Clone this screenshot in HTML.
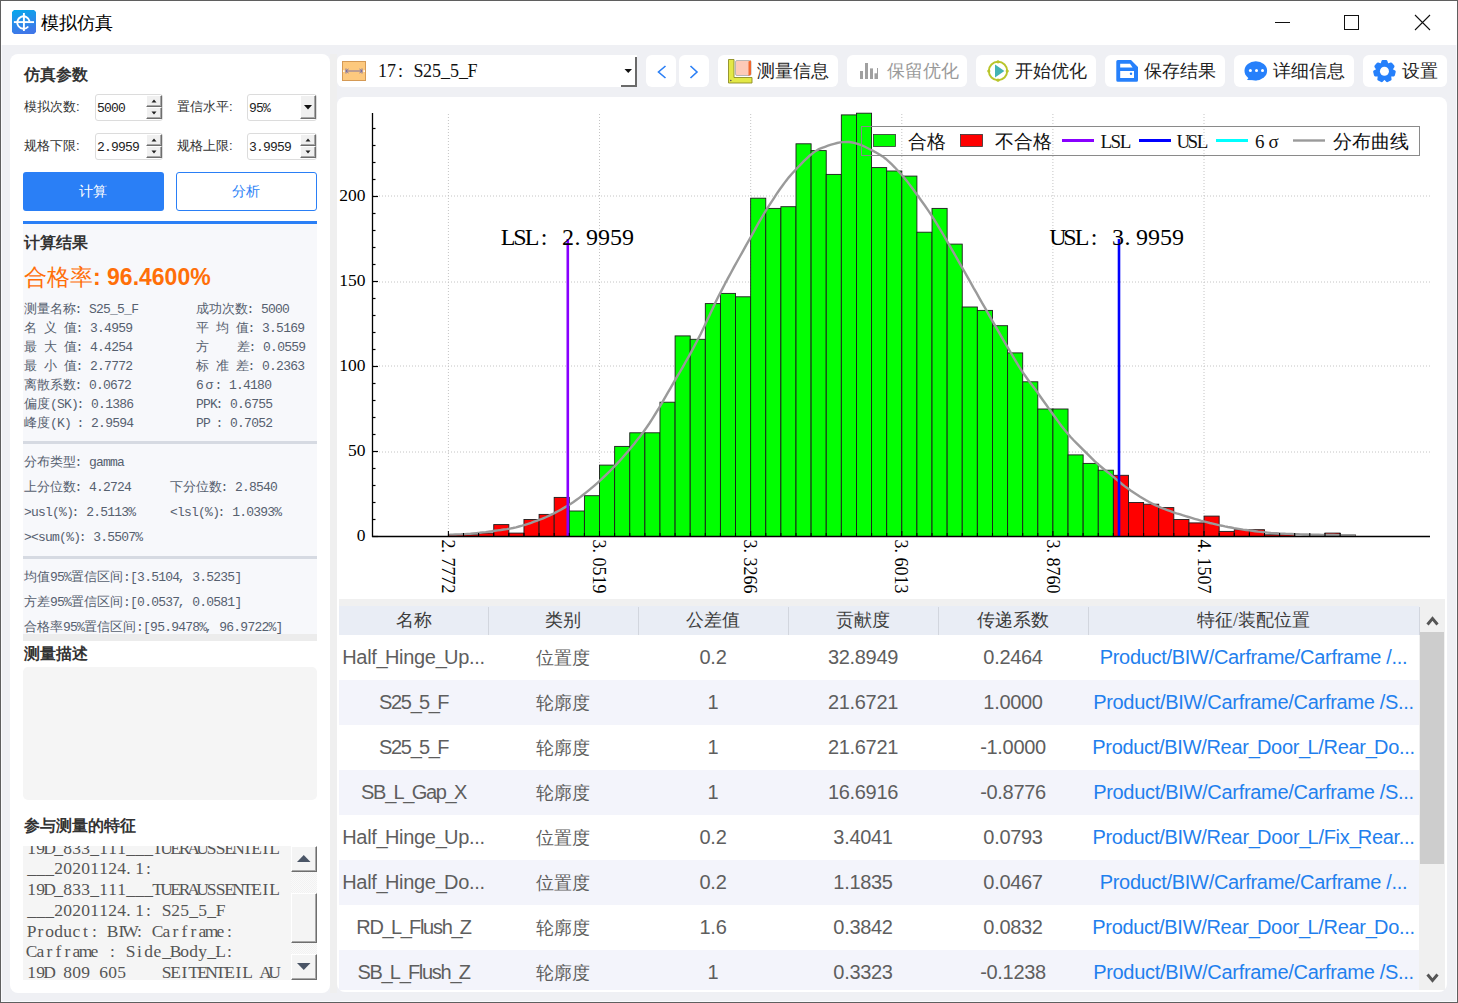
<!DOCTYPE html><html><head><meta charset="utf-8"><style>
*{margin:0;padding:0;box-sizing:border-box}
html,body{width:1458px;height:1003px;overflow:hidden;background:#eff0f4;font-family:"Liberation Sans",sans-serif}
.t{position:absolute;white-space:nowrap;line-height:1}
.m{font-family:"Liberation Mono",monospace;letter-spacing:-0.06em}
.b{position:absolute}
.fc{display:inline-block;width:1em;font-family:'Liberation Mono',monospace;text-indent:-0.12em}
.spin{position:absolute;background:#fff;border:1px solid #dcdcdc;border-radius:3px}
.btn3d{position:absolute;background:#f0f0f0;border-top:1px solid #fff;border-left:1px solid #fff;border-right:1px solid #6e6e6e;border-bottom:1px solid #6e6e6e;box-shadow:inset -1px -1px 0 #a8a8a8}
.tb{position:absolute;top:55px;height:32px;background:#fff;border-radius:6px}
</style></head><body>
<div class="b" style="left:0;top:0;width:1458px;height:45px;background:#fff"></div>
<svg class="b" style="left:12px;top:10px" width="24" height="24" viewBox="0 0 24 24">
<defs><linearGradient id="ig" x1="0" y1="0" x2="0.25" y2="1"><stop offset="0" stop-color="#06a9ec"/><stop offset="1" stop-color="#3f77e8"/></linearGradient></defs>
<path d="M2 0H22L24 2V22L22 24H2L0 22V2Z" fill="url(#ig)"/>
<path d="M16.25 16.5 A6.2 6.2 0 1 1 17.6 11.4" fill="none" stroke="#fff" stroke-width="1.9"/>
<line x1="11.9" y1="3" x2="11.9" y2="21" stroke="#fff" stroke-width="1.9"/>
<line x1="1.9" y1="12.1" x2="22" y2="12.1" stroke="#fff" stroke-width="1.9"/>
</svg>
<div class="t " style="left:41px;top:14px;font-size:18px;color:#000;">模拟仿真</div>
<div class="b" style="left:1275px;top:22px;width:15px;height:1px;background:#111"></div>
<div class="b" style="left:1344px;top:15px;width:15px;height:15px;border:1px solid #111"></div>
<svg class="b" style="left:1414px;top:14px" width="17" height="17"><path d="M1 1L16 16M16 1L1 16" stroke="#111" stroke-width="1.1"/></svg>
<div class="b" style="left:10px;top:54px;width:320px;height:939px;background:#fff;border-radius:8px"></div>
<div class="b" style="left:330px;top:54px;width:7px;height:939px;background:#efefef"></div>
<div class="t " style="left:24px;top:67px;font-size:15.7px;color:#333;font-weight:bold">仿真参数</div>
<div class="t " style="left:24px;top:100px;font-size:13px;color:#333;">模拟次数:</div>
<div class="spin" style="left:95px;top:94px;width:68px;height:27px"></div>
<div class="t " style="left:97px;top:101px;font-size:13px;color:#222;"><span class="m">5000</span></div>
<div class="btn3d" style="left:146px;top:95px;width:16px;height:12px"></div>
<div class="btn3d" style="left:146px;top:107px;width:16px;height:12px"></div>
<svg class="b" style="left:146px;top:95px" width="16" height="24"><path d="M5.5 7.5h5l-2.5-3z M5.5 16.5h5l-2.5 3z" fill="#222"/></svg>
<div class="t " style="left:177px;top:100px;font-size:13px;color:#333;">置信水平:</div>
<div class="spin" style="left:247px;top:94px;width:70px;height:27px"></div>
<div class="t " style="left:249px;top:101px;font-size:13px;color:#222;"><span class="m">95%</span></div>
<div class="btn3d" style="left:300px;top:95px;width:16px;height:24px"></div>
<svg class="b" style="left:300px;top:95px" width="16" height="24"><path d="M4 10h8l-4 4.6z" fill="#111"/></svg>
<div class="t " style="left:24px;top:139px;font-size:13px;color:#333;">规格下限:</div>
<div class="spin" style="left:95px;top:133px;width:68px;height:27px"></div>
<div class="t " style="left:97px;top:140px;font-size:13px;color:#222;"><span class="m">2.9959</span></div>
<div class="btn3d" style="left:146px;top:134px;width:16px;height:12px"></div>
<div class="btn3d" style="left:146px;top:146px;width:16px;height:12px"></div>
<svg class="b" style="left:146px;top:134px" width="16" height="24"><path d="M5.5 7.5h5l-2.5-3z M5.5 16.5h5l-2.5 3z" fill="#222"/></svg>
<div class="t " style="left:177px;top:139px;font-size:13px;color:#333;">规格上限:</div>
<div class="spin" style="left:247px;top:133px;width:70px;height:27px"></div>
<div class="t " style="left:249px;top:140px;font-size:13px;color:#222;"><span class="m">3.9959</span></div>
<div class="btn3d" style="left:300px;top:134px;width:16px;height:12px"></div>
<div class="btn3d" style="left:300px;top:146px;width:16px;height:12px"></div>
<svg class="b" style="left:300px;top:134px" width="16" height="24"><path d="M5.5 7.5h5l-2.5-3z M5.5 16.5h5l-2.5 3z" fill="#222"/></svg>
<div class="b" style="left:23px;top:172px;width:141px;height:39px;background:#2a7ff6;border-radius:3px"></div>
<div class="t " style="left:79px;top:184px;font-size:14px;color:#fff;">计算</div>
<div class="b" style="left:176px;top:172px;width:141px;height:39px;background:#fff;border:1px solid #2a7ff6;border-radius:3px"></div>
<div class="t " style="left:232px;top:184px;font-size:14px;color:#2a7ff6;">分析</div>
<div class="b" style="left:23px;top:221px;width:294px;height:3px;background:#2a7ff6"></div>
<div class="b" style="left:23px;top:224px;width:294px;height:410px;background:#f7f8fb"></div>
<div class="b" style="left:23px;top:441px;width:294px;height:3px;background:#d6dae2"></div>
<div class="b" style="left:23px;top:556px;width:294px;height:3px;background:#d6dae2"></div>
<div class="b" style="left:23px;top:634px;width:294px;height:7px;background:#ececec"></div>
<div class="t " style="left:24px;top:235px;font-size:15.7px;color:#333;font-weight:bold">计算结果</div>
<div class="t" style="left:24px;top:266px;font-size:23px;color:#ff6f08">合格率<b style="font-size:23px">: 96.4600%</b></div>
<div class="t " style="left:24px;top:302px;font-size:13px;color:#56606f;">测量名称<span class="fc">:</span><span class="m">S25_5_F</span></div>
<div class="t " style="left:196px;top:302px;font-size:13px;color:#56606f;">成功次数<span class="fc">:</span><span class="m">5000</span></div>
<div class="t " style="left:24px;top:321px;font-size:13px;color:#56606f;">名<span class="m">&nbsp;</span>义<span class="m">&nbsp;</span>值<span class="fc">:</span><span class="m">3.4959</span></div>
<div class="t " style="left:196px;top:321px;font-size:13px;color:#56606f;">平<span class="m">&nbsp;</span>均<span class="m">&nbsp;</span>值<span class="fc">:</span><span class="m">3.5169</span></div>
<div class="t " style="left:24px;top:340px;font-size:13px;color:#56606f;">最<span class="m">&nbsp;</span>大<span class="m">&nbsp;</span>值<span class="fc">:</span><span class="m">4.4254</span></div>
<div class="t " style="left:196px;top:340px;font-size:13px;color:#56606f;">方<span class="m">&nbsp;&nbsp;&nbsp;&nbsp;</span>差<span class="fc">:</span><span class="m">0.0559</span></div>
<div class="t " style="left:24px;top:359px;font-size:13px;color:#56606f;">最<span class="m">&nbsp;</span>小<span class="m">&nbsp;</span>值<span class="fc">:</span><span class="m">2.7772</span></div>
<div class="t " style="left:196px;top:359px;font-size:13px;color:#56606f;">标<span class="m">&nbsp;</span>准<span class="m">&nbsp;</span>差<span class="fc">:</span><span class="m">0.2363</span></div>
<div class="t " style="left:24px;top:378px;font-size:13px;color:#56606f;">离散系数<span class="fc">:</span><span class="m">0.0672</span></div>
<div class="t " style="left:196px;top:378px;font-size:13px;color:#56606f;"><span class="m">6</span><span style="display:inline-block;width:1em;text-align:center">σ</span><span class="fc">:</span><span class="m">1.4180</span></div>
<div class="t " style="left:24px;top:397px;font-size:13px;color:#56606f;">偏度<span class="m">(SK)</span><span class="fc">:</span><span class="m">0.1386</span></div>
<div class="t " style="left:196px;top:397px;font-size:13px;color:#56606f;"><span class="m">PPK</span><span class="fc">:</span><span class="m">0.6755</span></div>
<div class="t " style="left:24px;top:416px;font-size:13px;color:#56606f;">峰度<span class="m">(K)&nbsp;</span><span class="fc">:</span><span class="m">2.9594</span></div>
<div class="t " style="left:196px;top:416px;font-size:13px;color:#56606f;"><span class="m">PP&nbsp;</span><span class="fc">:</span><span class="m">0.7052</span></div>
<div class="t " style="left:24px;top:455px;font-size:13px;color:#56606f;">分布类型<span class="fc">:</span><span class="m">gamma</span></div>
<div class="t " style="left:24px;top:480px;font-size:13px;color:#56606f;">上分位数<span class="fc">:</span><span class="m">4.2724</span></div>
<div class="t " style="left:170px;top:480px;font-size:13px;color:#56606f;">下分位数<span class="fc">:</span><span class="m">2.8540</span></div>
<div class="t " style="left:24px;top:505px;font-size:13px;color:#56606f;"><span class="m">&gt;usl(%)</span><span class="fc">:</span><span class="m">2.5113%</span></div>
<div class="t " style="left:170px;top:505px;font-size:13px;color:#56606f;"><span class="m">&lt;lsl(%)</span><span class="fc">:</span><span class="m">1.0393%</span></div>
<div class="t " style="left:24px;top:530px;font-size:13px;color:#56606f;"><span class="m">&gt;&lt;sum(%)</span><span class="fc">:</span><span class="m">3.5507%</span></div>
<div class="t " style="left:24px;top:570px;font-size:13px;color:#56606f;">均值<span class="m">95%</span>置信区间<span class="m">:[3.5104</span><span class="fc">,</span><span class="m">3.5235]</span></div>
<div class="t " style="left:24px;top:595px;font-size:13px;color:#56606f;">方差<span class="m">95%</span>置信区间<span class="m">:[0.0537</span><span class="fc">,</span><span class="m">0.0581]</span></div>
<div class="b" style="left:23px;top:615px;width:294px;height:19px;overflow:hidden">
<div class="t " style="left:1px;top:5px;font-size:13px;color:#56606f;">合格率<span class="m">95%</span>置信区间<span class="m">:[95.9478%</span><span class="fc">,</span><span class="m">96.9722%]</span></div>
</div>
<div class="t " style="left:24px;top:646px;font-size:15.7px;color:#333;font-weight:bold">测量描述</div>
<div class="b" style="left:23px;top:667px;width:294px;height:133px;background:#f5f5f5;border-radius:5px"></div>
<div class="t " style="left:24px;top:818px;font-size:15.7px;color:#333;font-weight:bold">参与测量的特征</div>
<div class="b" style="left:23px;top:846px;width:294px;height:134px;background:#f5f5f5;overflow:hidden">
<svg class="b" style="left:0;top:0" width="294" height="134" font-family="Liberation Serif, serif" font-size="17.5" fill="#555">
<text x="8.5 17.5 26.5 35.5 44.5 53.5 62.5 71.5 80.5 89.5 98.5 107.5 116.5 125.5 134.5 143.5 152.5 161.5 170.5 179.5 188.5 197.5 206.5 215.5 224.5 233.5 242.5 251.5" y="7.5" text-anchor="middle" xml:space="preserve">19D_833_111___TUERAUSSENTEIL</text>
<text x="8.5 17.5 26.5 35.5 44.5 53.5 62.5 71.5 80.5 89.5 98.5 105.5 116.5 125.5" y="28.2" text-anchor="middle" xml:space="preserve">___20201124.1:</text>
<text x="8.5 17.5 26.5 35.5 44.5 53.5 62.5 71.5 80.5 89.5 98.5 107.5 116.5 125.5 134.5 143.5 152.5 161.5 170.5 179.5 188.5 197.5 206.5 215.5 224.5 233.5 242.5 251.5" y="49.0" text-anchor="middle" xml:space="preserve">19D_833_111___TUERAUSSENTEIL</text>
<text x="8.5 17.5 26.5 35.5 44.5 53.5 62.5 71.5 80.5 89.5 98.5 105.5 116.5 125.5 134.5 143.5 152.5 161.5 170.5 179.5 188.5 197.5" y="69.8" text-anchor="middle" xml:space="preserve">___20201124.1: S25_5_F</text>
<text x="8.5 17.5 26.5 35.5 44.5 53.5 62.5 71.5 80.5 89.5 98.5 107.5 116.5 125.5 134.5 143.5 152.5 161.5 170.5 179.5 188.5 197.5 206.5" y="90.5" text-anchor="middle" xml:space="preserve">Product: BIW: Carframe:</text>
<text x="8.5 17.5 26.5 35.5 44.5 53.5 62.5 71.5 80.5 89.5 98.5 107.5 116.5 125.5 134.5 143.5 152.5 161.5 170.5 179.5 188.5 197.5 206.5" y="111.2" text-anchor="middle" xml:space="preserve">Carframe : Side_Body_L:</text>
<text x="8.5 17.5 26.5 35.5 44.5 53.5 62.5 71.5 80.5 89.5 98.5 107.5 116.5 125.5 134.5 143.5 152.5 161.5 170.5 179.5 188.5 197.5 206.5 215.5 224.5 233.5 242.5 251.5" y="132.0" text-anchor="middle" xml:space="preserve">19D 809 605    SEITENTEIL AU</text>
</svg>
</div>
<div class="b" style="left:291px;top:846px;width:26px;height:134px;background:repeating-conic-gradient(#f2f2f2 0 25%,#fafafa 0 50%) 0 0/2px 2px"></div>
<div class="btn3d" style="left:291px;top:846px;width:26px;height:26px;background:#f4f4f4"></div>
<div class="btn3d" style="left:291px;top:893px;width:26px;height:50px;background:#f4f4f4"></div>
<div class="btn3d" style="left:291px;top:954px;width:26px;height:26px;background:#f4f4f4"></div>
<svg class="b" style="left:291px;top:846px" width="26" height="134"><path d="M6 16h13.5l-6.75-7z" fill="#4a5566"/><path d="M6 117h13.5l-6.75 7z" fill="#4a5566"/></svg>
<div class="b" style="left:337px;top:55px;width:300px;height:32px;background:#fff;border-radius:6px 0 0 6px"></div>
<div class="b" style="left:621px;top:57px;width:16px;height:30px;border-right:2px solid #6a6a6a;border-bottom:2px solid #6a6a6a;background:#fff"></div>
<svg class="b" style="left:620px;top:60px" width="16" height="20"><path d="M4.5 9h7.5l-3.75 4z" fill="#111"/></svg>
<svg class="b" style="left:342px;top:61px" width="24" height="20"><rect x="0.5" y="0.5" width="23" height="19" fill="#fdc97e" stroke="#d59a55"/>
<path d="M4 10h16M4 7.5v5M20 7.5v5M4 10l2.5-2M4 10l2.5 2M20 10l-2.5-2M20 10l-2.5 2" stroke="#6e6aa8" stroke-width="0.9" fill="none"/>
<rect x="1" y="9.3" width="1.6" height="1.6" fill="#fff"/><rect x="21.4" y="9.3" width="1.6" height="1.6" fill="#fff"/></svg>
<svg class="b" style="left:378px;top:59px;overflow:visible" width="101" height="28"><text x="4.5 13.5 22.5 31.5 40.5 49.5 58.5 67.5 76.5 85.5 94.5" y="18" font-size="18" font-family="Liberation Serif, serif" fill="#111" text-anchor="middle" xml:space="preserve">17: S25_5_F</text></svg>
<div class="tb" style="left:646px;width:30px"></div>
<div class="tb" style="left:679px;width:30px"></div>
<svg class="b" style="left:646px;top:55px" width="64" height="32"><path d="M19.5 11L12.5 17L19.5 23" fill="none" stroke="#2a7ff6" stroke-width="1.6"/><path d="M44.5 11L51 17L44.5 23" fill="none" stroke="#2a7ff6" stroke-width="1.6"/></svg>
<div class="tb" style="left:718px;width:120px"></div>
<div class="t " style="left:757px;top:62px;font-size:18px;color:#222;">测量信息</div>
<div class="tb" style="left:847px;width:120px"></div>
<div class="t " style="left:887px;top:62px;font-size:18px;color:#9a9a9a;">保留优化</div>
<div class="tb" style="left:976px;width:120px"></div>
<div class="t " style="left:1015px;top:62px;font-size:18px;color:#222;">开始优化</div>
<div class="tb" style="left:1105px;width:120px"></div>
<div class="t " style="left:1144px;top:62px;font-size:18px;color:#222;">保存结果</div>
<div class="tb" style="left:1234px;width:120px"></div>
<div class="t " style="left:1273px;top:62px;font-size:18px;color:#222;">详细信息</div>
<div class="tb" style="left:1363px;width:84px"></div>
<div class="t " style="left:1402px;top:62px;font-size:18px;color:#222;">设置</div>
<svg class="b" style="left:726px;top:57px" width="28" height="28">
<path d="M2.5 2.5h5.5v18h18v5.5h-23.5z" fill="#e3e846" stroke="#8c8c24" stroke-width="0.9"/>
<rect x="9.5" y="3.5" width="15.5" height="15" rx="1.5" fill="#fdcab8" stroke="#b0b0b0" stroke-width="0.9"/>
<path d="M22.5 4.5l2.5-1v14l-2.5 1.5z" fill="#f2682f"/>
<circle cx="4.8" cy="23.5" r="0.8" fill="#555"/></svg>
<svg class="b" style="left:856px;top:58px" width="26" height="26">
<rect x="4" y="13" width="3" height="8" fill="#a0a0a0"/><rect x="9" y="5" width="3" height="16" fill="#a0a0a0"/>
<rect x="14" y="10.4" width="3" height="10.6" fill="#a0a0a0"/><rect x="18.5" y="15.3" width="3" height="5.7" fill="#a0a0a0"/><rect x="21" y="10" width="1" height="11" fill="#a0a0a0"/></svg>
<svg class="b" style="left:984px;top:57px" width="28" height="28">
<circle cx="14" cy="14" r="9.2" fill="none" stroke="#b9c52c" stroke-width="1.9"/>
<circle cx="14" cy="4.8" r="1.6" fill="#b9c52c"/><circle cx="14" cy="23.2" r="1.6" fill="#b9c52c"/><circle cx="4.8" cy="14" r="1.6" fill="#b9c52c"/><circle cx="23.2" cy="14" r="1.6" fill="#b9c52c"/>
<path d="M11 7.6v12.8l9.4-6.4z" fill="#43b3b3"/></svg>
<svg class="b" style="left:1114px;top:58px" width="26" height="26">
<path d="M3.8 2.1H17L24 9V22.3A1.5 1.5 0 0 1 22.5 23.8H3.8A1.5 1.5 0 0 1 2.3 22.3V3.6A1.5 1.5 0 0 1 3.8 2.1Z" fill="#2680fb"/>
<path d="M6.2 5.8H16L18.6 9.6H6.2Z" fill="#fff"/>
<rect x="6.2" y="13" width="13.8" height="7" fill="#fff"/><circle cx="17" cy="15.8" r="1.2" fill="#2680fb"/></svg>
<svg class="b" style="left:1240px;top:57px" width="30" height="28">
<ellipse cx="15.8" cy="13.8" rx="11.3" ry="9.6" fill="#2680fb"/><path d="M9.5 19.5L7 22.9L17 23.3z" fill="#2680fb"/>
<circle cx="10.4" cy="13.6" r="1.5" fill="#fff"/><circle cx="16.5" cy="13.6" r="1.5" fill="#fff"/><circle cx="22.5" cy="13.6" r="1.5" fill="#fff"/></svg>
<svg class="b" style="left:1372px;top:59px" width="26" height="26"><path d="M9.80 5.29 L10.71 2.35 L14.19 2.35 L15.10 5.29 L15.81 5.61 L16.37 5.92 L16.94 6.32 L16.20 5.82 L19.07 4.70 L21.23 7.42 L19.50 9.97 L19.70 10.72 L19.80 11.35 L19.85 12.05 L19.78 11.15 L22.44 12.70 L21.66 16.08 L18.60 16.32 L18.13 16.94 L17.70 17.42 L17.18 17.89 L17.84 17.27 L18.29 20.32 L15.16 21.83 L13.06 19.57 L12.28 19.60 L11.64 19.56 L10.95 19.45 L11.84 19.57 L9.74 21.83 L6.61 20.32 L7.06 17.27 L6.56 16.68 L6.19 16.15 L5.85 15.55 L6.30 16.32 L3.24 16.08 L2.46 12.70 L5.12 11.15 L5.27 10.39 L5.46 9.77 L5.72 9.13 L5.40 9.97 L3.67 7.42 L5.83 4.70 L8.70 5.82 L9.39 5.46 L9.99 5.22 L10.66 5.02Z" fill="#2680fb" stroke="#2680fb" stroke-width="2.6" stroke-linejoin="round"/><circle cx="12.45" cy="12.2" r="4.5" fill="#fff"/></svg>
<div class="b" style="left:337px;top:97px;width:1110px;height:895px;background:#fff;border-radius:8px"></div>
<svg class="b" style="left:0;top:0" width="1458" height="1003" font-family="Liberation Serif, serif">
<line x1="448.4" y1="114" x2="448.4" y2="536" stroke="#c4c4c4" stroke-width="1" stroke-dasharray="1 2"/>
<line x1="599.5" y1="114" x2="599.5" y2="536" stroke="#c4c4c4" stroke-width="1" stroke-dasharray="1 2"/>
<line x1="750.7" y1="114" x2="750.7" y2="536" stroke="#c4c4c4" stroke-width="1" stroke-dasharray="1 2"/>
<line x1="901.8" y1="114" x2="901.8" y2="536" stroke="#c4c4c4" stroke-width="1" stroke-dasharray="1 2"/>
<line x1="1052.9" y1="114" x2="1052.9" y2="536" stroke="#c4c4c4" stroke-width="1" stroke-dasharray="1 2"/>
<line x1="1204.0" y1="114" x2="1204.0" y2="536" stroke="#c4c4c4" stroke-width="1" stroke-dasharray="1 2"/>
<line x1="373" y1="452.0" x2="1430" y2="452.0" stroke="#c4c4c4" stroke-width="1" stroke-dasharray="1 2"/>
<line x1="373" y1="366.0" x2="1430" y2="366.0" stroke="#c4c4c4" stroke-width="1" stroke-dasharray="1 2"/>
<line x1="373" y1="282.0" x2="1430" y2="282.0" stroke="#c4c4c4" stroke-width="1" stroke-dasharray="1 2"/>
<line x1="373" y1="196.0" x2="1430" y2="196.0" stroke="#c4c4c4" stroke-width="1" stroke-dasharray="1 2"/>
<rect x="448.40" y="534.80" width="15.11" height="1.70" fill="#ff0000" stroke="#1c1c1c" stroke-width="0.9"/>
<rect x="463.51" y="534.80" width="15.11" height="1.70" fill="#ff0000" stroke="#1c1c1c" stroke-width="0.9"/>
<rect x="478.63" y="533.10" width="15.11" height="3.40" fill="#ff0000" stroke="#1c1c1c" stroke-width="0.9"/>
<rect x="493.74" y="524.60" width="15.11" height="11.90" fill="#ff0000" stroke="#1c1c1c" stroke-width="0.9"/>
<rect x="508.85" y="533.10" width="15.11" height="3.40" fill="#ff0000" stroke="#1c1c1c" stroke-width="0.9"/>
<rect x="523.96" y="519.50" width="15.11" height="17.00" fill="#ff0000" stroke="#1c1c1c" stroke-width="0.9"/>
<rect x="539.08" y="514.40" width="15.11" height="22.10" fill="#ff0000" stroke="#1c1c1c" stroke-width="0.9"/>
<rect x="554.19" y="497.40" width="15.11" height="39.10" fill="#ff0000" stroke="#1c1c1c" stroke-width="0.9"/>
<rect x="569.30" y="511.00" width="15.11" height="25.50" fill="#00ff00" stroke="#1c1c1c" stroke-width="0.9"/>
<rect x="584.42" y="495.70" width="15.11" height="40.80" fill="#00ff00" stroke="#1c1c1c" stroke-width="0.9"/>
<rect x="599.53" y="465.10" width="15.11" height="71.40" fill="#00ff00" stroke="#1c1c1c" stroke-width="0.9"/>
<rect x="614.64" y="446.40" width="15.11" height="90.10" fill="#00ff00" stroke="#1c1c1c" stroke-width="0.9"/>
<rect x="629.76" y="432.80" width="15.11" height="103.70" fill="#00ff00" stroke="#1c1c1c" stroke-width="0.9"/>
<rect x="644.87" y="432.80" width="15.11" height="103.70" fill="#00ff00" stroke="#1c1c1c" stroke-width="0.9"/>
<rect x="659.98" y="402.20" width="15.11" height="134.30" fill="#00ff00" stroke="#1c1c1c" stroke-width="0.9"/>
<rect x="675.10" y="335.90" width="15.11" height="200.60" fill="#00ff00" stroke="#1c1c1c" stroke-width="0.9"/>
<rect x="690.21" y="339.30" width="15.11" height="197.20" fill="#00ff00" stroke="#1c1c1c" stroke-width="0.9"/>
<rect x="705.32" y="303.60" width="15.11" height="232.90" fill="#00ff00" stroke="#1c1c1c" stroke-width="0.9"/>
<rect x="720.43" y="293.40" width="15.11" height="243.10" fill="#00ff00" stroke="#1c1c1c" stroke-width="0.9"/>
<rect x="735.55" y="296.80" width="15.11" height="239.70" fill="#00ff00" stroke="#1c1c1c" stroke-width="0.9"/>
<rect x="750.66" y="198.20" width="15.11" height="338.30" fill="#00ff00" stroke="#1c1c1c" stroke-width="0.9"/>
<rect x="765.77" y="208.40" width="15.11" height="328.10" fill="#00ff00" stroke="#1c1c1c" stroke-width="0.9"/>
<rect x="780.89" y="206.70" width="15.11" height="329.80" fill="#00ff00" stroke="#1c1c1c" stroke-width="0.9"/>
<rect x="796.00" y="143.80" width="15.11" height="392.70" fill="#00ff00" stroke="#1c1c1c" stroke-width="0.9"/>
<rect x="811.11" y="150.60" width="15.11" height="385.90" fill="#00ff00" stroke="#1c1c1c" stroke-width="0.9"/>
<rect x="826.22" y="174.40" width="15.11" height="362.10" fill="#00ff00" stroke="#1c1c1c" stroke-width="0.9"/>
<rect x="841.34" y="114.90" width="15.11" height="421.60" fill="#00ff00" stroke="#1c1c1c" stroke-width="0.9"/>
<rect x="856.45" y="113.20" width="15.11" height="423.30" fill="#00ff00" stroke="#1c1c1c" stroke-width="0.9"/>
<rect x="871.56" y="167.60" width="15.11" height="368.90" fill="#00ff00" stroke="#1c1c1c" stroke-width="0.9"/>
<rect x="886.68" y="171.00" width="15.11" height="365.50" fill="#00ff00" stroke="#1c1c1c" stroke-width="0.9"/>
<rect x="901.79" y="176.10" width="15.11" height="360.40" fill="#00ff00" stroke="#1c1c1c" stroke-width="0.9"/>
<rect x="916.90" y="232.20" width="15.11" height="304.30" fill="#00ff00" stroke="#1c1c1c" stroke-width="0.9"/>
<rect x="932.02" y="208.40" width="15.11" height="328.10" fill="#00ff00" stroke="#1c1c1c" stroke-width="0.9"/>
<rect x="947.13" y="244.10" width="15.11" height="292.40" fill="#00ff00" stroke="#1c1c1c" stroke-width="0.9"/>
<rect x="962.24" y="307.00" width="15.11" height="229.50" fill="#00ff00" stroke="#1c1c1c" stroke-width="0.9"/>
<rect x="977.35" y="310.40" width="15.11" height="226.10" fill="#00ff00" stroke="#1c1c1c" stroke-width="0.9"/>
<rect x="992.47" y="325.70" width="15.11" height="210.80" fill="#00ff00" stroke="#1c1c1c" stroke-width="0.9"/>
<rect x="1007.58" y="352.90" width="15.11" height="183.60" fill="#00ff00" stroke="#1c1c1c" stroke-width="0.9"/>
<rect x="1022.69" y="381.80" width="15.11" height="154.70" fill="#00ff00" stroke="#1c1c1c" stroke-width="0.9"/>
<rect x="1037.81" y="409.00" width="15.11" height="127.50" fill="#00ff00" stroke="#1c1c1c" stroke-width="0.9"/>
<rect x="1052.92" y="409.00" width="15.11" height="127.50" fill="#00ff00" stroke="#1c1c1c" stroke-width="0.9"/>
<rect x="1068.03" y="454.90" width="15.11" height="81.60" fill="#00ff00" stroke="#1c1c1c" stroke-width="0.9"/>
<rect x="1083.15" y="463.40" width="15.11" height="73.10" fill="#00ff00" stroke="#1c1c1c" stroke-width="0.9"/>
<rect x="1098.26" y="470.20" width="15.11" height="66.30" fill="#00ff00" stroke="#1c1c1c" stroke-width="0.9"/>
<rect x="1113.37" y="475.30" width="15.11" height="61.20" fill="#ff0000" stroke="#1c1c1c" stroke-width="0.9"/>
<rect x="1128.49" y="502.50" width="15.11" height="34.00" fill="#ff0000" stroke="#1c1c1c" stroke-width="0.9"/>
<rect x="1143.60" y="504.20" width="15.11" height="32.30" fill="#ff0000" stroke="#1c1c1c" stroke-width="0.9"/>
<rect x="1158.71" y="507.60" width="15.11" height="28.90" fill="#ff0000" stroke="#1c1c1c" stroke-width="0.9"/>
<rect x="1173.82" y="519.50" width="15.11" height="17.00" fill="#ff0000" stroke="#1c1c1c" stroke-width="0.9"/>
<rect x="1188.94" y="522.90" width="15.11" height="13.60" fill="#ff0000" stroke="#1c1c1c" stroke-width="0.9"/>
<rect x="1204.05" y="516.10" width="15.11" height="20.40" fill="#ff0000" stroke="#1c1c1c" stroke-width="0.9"/>
<rect x="1219.16" y="531.40" width="15.11" height="5.10" fill="#ff0000" stroke="#1c1c1c" stroke-width="0.9"/>
<rect x="1234.28" y="529.70" width="15.11" height="6.80" fill="#ff0000" stroke="#1c1c1c" stroke-width="0.9"/>
<rect x="1249.39" y="529.70" width="15.11" height="6.80" fill="#ff0000" stroke="#1c1c1c" stroke-width="0.9"/>
<rect x="1264.50" y="534.80" width="15.11" height="1.70" fill="#ff0000" stroke="#1c1c1c" stroke-width="0.9"/>
<rect x="1279.61" y="534.80" width="15.11" height="1.70" fill="#ff0000" stroke="#1c1c1c" stroke-width="0.9"/>
<rect x="1324.95" y="533.10" width="15.11" height="3.40" fill="#ff0000" stroke="#1c1c1c" stroke-width="0.9"/>
<rect x="1340.07" y="534.80" width="15.11" height="1.70" fill="#ff0000" stroke="#1c1c1c" stroke-width="0.9"/>
<path d="M449.3 534.6 L452.3 534.6 L455.4 534.5 L458.4 534.4 L461.4 534.3 L464.4 534.1 L467.5 533.9 L470.5 533.7 L473.5 533.4 L476.6 533.1 L479.6 532.8 L482.6 532.4 L485.7 532.1 L488.7 531.7 L491.7 531.3 L494.7 530.8 L497.8 530.4 L500.8 530.0 L503.8 529.5 L506.9 529.1 L509.9 528.6 L512.9 528.0 L516.0 527.3 L519.0 526.5 L522.0 525.7 L525.0 524.8 L528.1 523.8 L531.1 522.8 L534.1 521.7 L537.2 520.6 L540.2 519.5 L543.2 518.3 L546.3 517.0 L549.3 515.6 L552.3 514.2 L555.3 512.6 L558.4 511.0 L561.4 509.4 L564.4 507.6 L567.5 505.8 L570.5 504.0 L573.5 502.0 L576.6 499.8 L579.6 497.6 L582.6 495.3 L585.6 492.9 L588.7 490.4 L591.7 487.9 L594.7 485.3 L597.8 482.6 L600.8 479.8 L603.8 477.0 L606.8 474.1 L609.9 471.1 L612.9 468.0 L615.9 464.9 L619.0 461.6 L622.0 458.3 L625.0 454.8 L628.1 451.3 L631.1 447.6 L634.1 443.9 L637.1 440.1 L640.2 436.2 L643.2 432.2 L646.2 428.0 L649.3 423.5 L652.3 418.8 L655.3 414.0 L658.4 409.0 L661.4 403.8 L664.4 398.6 L667.4 393.4 L670.5 388.1 L673.5 382.9 L676.5 377.7 L679.6 372.5 L682.6 367.3 L685.6 362.0 L688.7 356.6 L691.7 351.1 L694.7 345.5 L697.7 339.7 L700.8 333.7 L703.8 327.5 L706.8 321.0 L709.9 314.5 L712.9 308.0 L715.9 301.6 L718.9 295.5 L722.0 289.6 L725.0 283.8 L728.0 278.1 L731.1 272.5 L734.1 266.9 L737.1 261.5 L740.2 256.0 L743.2 250.6 L746.2 245.2 L749.2 239.8 L752.3 234.4 L755.3 228.9 L758.3 223.4 L761.4 218.1 L764.4 213.0 L767.4 208.1 L770.5 203.4 L773.5 198.8 L776.5 194.2 L779.5 189.8 L782.6 185.5 L785.6 181.4 L788.6 177.6 L791.7 174.0 L794.7 170.7 L797.7 167.5 L800.8 164.3 L803.8 161.2 L806.8 158.3 L809.8 155.5 L812.9 153.1 L815.9 150.9 L818.9 149.2 L822.0 147.9 L825.0 146.8 L828.0 145.7 L831.1 144.7 L834.1 143.8 L837.1 143.0 L840.1 142.4 L843.2 142.1 L846.2 141.9 L849.2 142.0 L852.3 142.5 L855.3 143.1 L858.3 144.1 L861.3 145.2 L864.4 146.5 L867.4 148.0 L870.4 149.5 L873.5 151.1 L876.5 152.8 L879.5 154.5 L882.6 156.4 L885.6 158.7 L888.6 161.3 L891.6 164.2 L894.7 167.3 L897.7 170.5 L900.7 173.8 L903.8 177.2 L906.8 180.9 L909.8 184.9 L912.9 189.0 L915.9 193.2 L918.9 197.3 L921.9 201.5 L925.0 205.7 L928.0 210.1 L931.0 214.6 L934.1 219.4 L937.1 224.3 L940.1 229.3 L943.2 234.5 L946.2 239.6 L949.2 244.8 L952.2 250.1 L955.3 255.5 L958.3 260.8 L961.3 266.2 L964.4 271.5 L967.4 276.9 L970.4 282.2 L973.4 287.6 L976.5 292.9 L979.5 298.3 L982.5 303.6 L985.6 308.9 L988.6 314.3 L991.6 319.6 L994.7 324.9 L997.7 330.2 L1000.7 335.4 L1003.7 340.6 L1006.8 345.8 L1009.8 351.0 L1012.8 356.2 L1015.9 361.3 L1018.9 366.3 L1021.9 371.1 L1025.0 375.5 L1028.0 379.7 L1031.0 383.8 L1034.0 387.8 L1037.1 391.9 L1040.1 396.2 L1043.1 400.5 L1046.2 404.8 L1049.2 409.1 L1052.2 413.3 L1055.3 417.5 L1058.3 421.6 L1061.3 425.7 L1064.3 429.6 L1067.4 433.3 L1070.4 436.8 L1073.4 440.0 L1076.5 443.1 L1079.5 446.1 L1082.5 449.1 L1085.6 452.2 L1088.6 455.2 L1091.6 458.2 L1094.6 461.1 L1097.7 463.9 L1100.7 466.5 L1103.7 469.0 L1106.8 471.5 L1109.8 473.9 L1112.8 476.4 L1115.8 478.9 L1118.9 481.4 L1121.9 484.0 L1124.9 486.4 L1128.0 488.6 L1131.0 490.7 L1134.0 492.7 L1137.1 494.7 L1140.1 496.7 L1143.1 498.5 L1146.1 500.3 L1149.2 502.0 L1152.2 503.6 L1155.2 505.1 L1158.3 506.5 L1161.3 507.8 L1164.3 509.0 L1167.4 510.1 L1170.4 511.2 L1173.4 512.3 L1176.4 513.3 L1179.5 514.2 L1182.5 515.2 L1185.5 516.1 L1188.6 517.0 L1191.6 517.9 L1194.6 518.8 L1197.7 519.7 L1200.7 520.6 L1203.7 521.4 L1206.7 522.2 L1209.8 523.0 L1212.8 523.7 L1215.8 524.4 L1218.9 525.1 L1221.9 525.7 L1224.9 526.4 L1227.9 527.0 L1231.0 527.5 L1234.0 528.1 L1237.0 528.6 L1240.1 529.1 L1243.1 529.6 L1246.1 530.0 L1249.2 530.4 L1252.2 530.8 L1255.2 531.2 L1258.2 531.6 L1261.3 531.9 L1264.3 532.3 L1267.3 532.6 L1270.4 532.9 L1273.4 533.1 L1276.4 533.3 L1279.5 533.5 L1282.5 533.6 L1285.5 533.8 L1288.5 533.9 L1291.6 534.0 L1294.6 534.2 L1297.6 534.3 L1300.7 534.4 L1303.7 534.5 L1306.7 534.5 L1309.8 534.6 L1312.8 534.7 L1315.8 534.8 L1318.8 534.8 L1321.9 534.9 L1324.9 534.9 L1327.9 535.0 L1331.0 535.0 L1334.0 535.0 L1337.0 535.1 L1340.1 535.1 L1343.1 535.1 L1346.1 535.2 L1349.1 535.2 L1352.2 535.2 L1355.2 535.2" fill="none" stroke="#9a9a9a" stroke-width="2.4"/>
<line x1="567.8" y1="239" x2="567.8" y2="536" stroke="#8800ff" stroke-width="2.6"/>
<line x1="1119" y1="239" x2="1119" y2="536" stroke="#0000ff" stroke-width="2.6"/>
<line x1="372.5" y1="113" x2="372.5" y2="537" stroke="#000" stroke-width="1.3"/>
<line x1="372" y1="536.5" x2="1430" y2="536.5" stroke="#000" stroke-width="1.3"/>
<line x1="372.5" y1="536.5" x2="378.0" y2="536.5" stroke="#000" stroke-width="1.2"/>
<line x1="372.5" y1="519.5" x2="375.5" y2="519.5" stroke="#000" stroke-width="1.2"/>
<line x1="372.5" y1="502.5" x2="375.5" y2="502.5" stroke="#000" stroke-width="1.2"/>
<line x1="372.5" y1="485.5" x2="375.5" y2="485.5" stroke="#000" stroke-width="1.2"/>
<line x1="372.5" y1="468.5" x2="375.5" y2="468.5" stroke="#000" stroke-width="1.2"/>
<line x1="372.5" y1="451.5" x2="378.0" y2="451.5" stroke="#000" stroke-width="1.2"/>
<line x1="372.5" y1="434.5" x2="375.5" y2="434.5" stroke="#000" stroke-width="1.2"/>
<line x1="372.5" y1="417.5" x2="375.5" y2="417.5" stroke="#000" stroke-width="1.2"/>
<line x1="372.5" y1="400.5" x2="375.5" y2="400.5" stroke="#000" stroke-width="1.2"/>
<line x1="372.5" y1="383.5" x2="375.5" y2="383.5" stroke="#000" stroke-width="1.2"/>
<line x1="372.5" y1="366.5" x2="378.0" y2="366.5" stroke="#000" stroke-width="1.2"/>
<line x1="372.5" y1="349.5" x2="375.5" y2="349.5" stroke="#000" stroke-width="1.2"/>
<line x1="372.5" y1="332.5" x2="375.5" y2="332.5" stroke="#000" stroke-width="1.2"/>
<line x1="372.5" y1="315.5" x2="375.5" y2="315.5" stroke="#000" stroke-width="1.2"/>
<line x1="372.5" y1="298.5" x2="375.5" y2="298.5" stroke="#000" stroke-width="1.2"/>
<line x1="372.5" y1="281.5" x2="378.0" y2="281.5" stroke="#000" stroke-width="1.2"/>
<line x1="372.5" y1="264.5" x2="375.5" y2="264.5" stroke="#000" stroke-width="1.2"/>
<line x1="372.5" y1="247.5" x2="375.5" y2="247.5" stroke="#000" stroke-width="1.2"/>
<line x1="372.5" y1="230.5" x2="375.5" y2="230.5" stroke="#000" stroke-width="1.2"/>
<line x1="372.5" y1="213.5" x2="375.5" y2="213.5" stroke="#000" stroke-width="1.2"/>
<line x1="372.5" y1="196.5" x2="378.0" y2="196.5" stroke="#000" stroke-width="1.2"/>
<line x1="372.5" y1="179.5" x2="375.5" y2="179.5" stroke="#000" stroke-width="1.2"/>
<line x1="372.5" y1="162.5" x2="375.5" y2="162.5" stroke="#000" stroke-width="1.2"/>
<line x1="372.5" y1="145.5" x2="375.5" y2="145.5" stroke="#000" stroke-width="1.2"/>
<line x1="372.5" y1="128.5" x2="375.5" y2="128.5" stroke="#000" stroke-width="1.2"/>
<line x1="448.4" y1="536" x2="448.4" y2="531.0" stroke="#000" stroke-width="1.1"/>
<line x1="463.5" y1="536" x2="463.5" y2="533.0" stroke="#000" stroke-width="1.1"/>
<line x1="478.6" y1="536" x2="478.6" y2="533.0" stroke="#000" stroke-width="1.1"/>
<line x1="493.7" y1="536" x2="493.7" y2="533.0" stroke="#000" stroke-width="1.1"/>
<line x1="508.9" y1="536" x2="508.9" y2="533.0" stroke="#000" stroke-width="1.1"/>
<line x1="524.0" y1="536" x2="524.0" y2="533.0" stroke="#000" stroke-width="1.1"/>
<line x1="539.1" y1="536" x2="539.1" y2="533.0" stroke="#000" stroke-width="1.1"/>
<line x1="554.2" y1="536" x2="554.2" y2="533.0" stroke="#000" stroke-width="1.1"/>
<line x1="569.3" y1="536" x2="569.3" y2="533.0" stroke="#000" stroke-width="1.1"/>
<line x1="584.4" y1="536" x2="584.4" y2="533.0" stroke="#000" stroke-width="1.1"/>
<line x1="599.5" y1="536" x2="599.5" y2="531.0" stroke="#000" stroke-width="1.1"/>
<line x1="614.6" y1="536" x2="614.6" y2="533.0" stroke="#000" stroke-width="1.1"/>
<line x1="629.8" y1="536" x2="629.8" y2="533.0" stroke="#000" stroke-width="1.1"/>
<line x1="644.9" y1="536" x2="644.9" y2="533.0" stroke="#000" stroke-width="1.1"/>
<line x1="660.0" y1="536" x2="660.0" y2="533.0" stroke="#000" stroke-width="1.1"/>
<line x1="675.1" y1="536" x2="675.1" y2="533.0" stroke="#000" stroke-width="1.1"/>
<line x1="690.2" y1="536" x2="690.2" y2="533.0" stroke="#000" stroke-width="1.1"/>
<line x1="705.3" y1="536" x2="705.3" y2="533.0" stroke="#000" stroke-width="1.1"/>
<line x1="720.4" y1="536" x2="720.4" y2="533.0" stroke="#000" stroke-width="1.1"/>
<line x1="735.5" y1="536" x2="735.5" y2="533.0" stroke="#000" stroke-width="1.1"/>
<line x1="750.7" y1="536" x2="750.7" y2="531.0" stroke="#000" stroke-width="1.1"/>
<line x1="765.8" y1="536" x2="765.8" y2="533.0" stroke="#000" stroke-width="1.1"/>
<line x1="780.9" y1="536" x2="780.9" y2="533.0" stroke="#000" stroke-width="1.1"/>
<line x1="796.0" y1="536" x2="796.0" y2="533.0" stroke="#000" stroke-width="1.1"/>
<line x1="811.1" y1="536" x2="811.1" y2="533.0" stroke="#000" stroke-width="1.1"/>
<line x1="826.2" y1="536" x2="826.2" y2="533.0" stroke="#000" stroke-width="1.1"/>
<line x1="841.3" y1="536" x2="841.3" y2="533.0" stroke="#000" stroke-width="1.1"/>
<line x1="856.5" y1="536" x2="856.5" y2="533.0" stroke="#000" stroke-width="1.1"/>
<line x1="871.6" y1="536" x2="871.6" y2="533.0" stroke="#000" stroke-width="1.1"/>
<line x1="886.7" y1="536" x2="886.7" y2="533.0" stroke="#000" stroke-width="1.1"/>
<line x1="901.8" y1="536" x2="901.8" y2="531.0" stroke="#000" stroke-width="1.1"/>
<line x1="916.9" y1="536" x2="916.9" y2="533.0" stroke="#000" stroke-width="1.1"/>
<line x1="932.0" y1="536" x2="932.0" y2="533.0" stroke="#000" stroke-width="1.1"/>
<line x1="947.1" y1="536" x2="947.1" y2="533.0" stroke="#000" stroke-width="1.1"/>
<line x1="962.2" y1="536" x2="962.2" y2="533.0" stroke="#000" stroke-width="1.1"/>
<line x1="977.4" y1="536" x2="977.4" y2="533.0" stroke="#000" stroke-width="1.1"/>
<line x1="992.5" y1="536" x2="992.5" y2="533.0" stroke="#000" stroke-width="1.1"/>
<line x1="1007.6" y1="536" x2="1007.6" y2="533.0" stroke="#000" stroke-width="1.1"/>
<line x1="1022.7" y1="536" x2="1022.7" y2="533.0" stroke="#000" stroke-width="1.1"/>
<line x1="1037.8" y1="536" x2="1037.8" y2="533.0" stroke="#000" stroke-width="1.1"/>
<line x1="1052.9" y1="536" x2="1052.9" y2="531.0" stroke="#000" stroke-width="1.1"/>
<line x1="1068.0" y1="536" x2="1068.0" y2="533.0" stroke="#000" stroke-width="1.1"/>
<line x1="1083.1" y1="536" x2="1083.1" y2="533.0" stroke="#000" stroke-width="1.1"/>
<line x1="1098.3" y1="536" x2="1098.3" y2="533.0" stroke="#000" stroke-width="1.1"/>
<line x1="1113.4" y1="536" x2="1113.4" y2="533.0" stroke="#000" stroke-width="1.1"/>
<line x1="1128.5" y1="536" x2="1128.5" y2="533.0" stroke="#000" stroke-width="1.1"/>
<line x1="1143.6" y1="536" x2="1143.6" y2="533.0" stroke="#000" stroke-width="1.1"/>
<line x1="1158.7" y1="536" x2="1158.7" y2="533.0" stroke="#000" stroke-width="1.1"/>
<line x1="1173.8" y1="536" x2="1173.8" y2="533.0" stroke="#000" stroke-width="1.1"/>
<line x1="1188.9" y1="536" x2="1188.9" y2="533.0" stroke="#000" stroke-width="1.1"/>
<line x1="1204.0" y1="536" x2="1204.0" y2="531.0" stroke="#000" stroke-width="1.1"/>
<line x1="1219.2" y1="536" x2="1219.2" y2="533.0" stroke="#000" stroke-width="1.1"/>
<line x1="1234.3" y1="536" x2="1234.3" y2="533.0" stroke="#000" stroke-width="1.1"/>
<line x1="1249.4" y1="536" x2="1249.4" y2="533.0" stroke="#000" stroke-width="1.1"/>
<line x1="1264.5" y1="536" x2="1264.5" y2="533.0" stroke="#000" stroke-width="1.1"/>
<line x1="1279.6" y1="536" x2="1279.6" y2="533.0" stroke="#000" stroke-width="1.1"/>
<line x1="1294.7" y1="536" x2="1294.7" y2="533.0" stroke="#000" stroke-width="1.1"/>
<line x1="1309.8" y1="536" x2="1309.8" y2="533.0" stroke="#000" stroke-width="1.1"/>
<line x1="1325.0" y1="536" x2="1325.0" y2="533.0" stroke="#000" stroke-width="1.1"/>
<line x1="1340.1" y1="536" x2="1340.1" y2="533.0" stroke="#000" stroke-width="1.1"/>
<text x="365.5" y="541.1" font-size="17.5" text-anchor="end" fill="#000">0</text>
<text x="365.5" y="456.1" font-size="17.5" text-anchor="end" fill="#000">50</text>
<text x="365.5" y="371.1" font-size="17.5" text-anchor="end" fill="#000">100</text>
<text x="365.5" y="286.1" font-size="17.5" text-anchor="end" fill="#000">150</text>
<text x="365.5" y="201.1" font-size="17.5" text-anchor="end" fill="#000">200</text>
<text transform="translate(448.4,539.5) rotate(90)" x="4.5 11.3 22.5 31.5 40.5 49.5" y="6.3" font-size="18" fill="#000" text-anchor="middle">2.7772</text>
<text transform="translate(599.5,539.5) rotate(90)" x="4.5 11.3 22.5 31.5 40.5 49.5" y="6.3" font-size="18" fill="#000" text-anchor="middle">3.0519</text>
<text transform="translate(750.7,539.5) rotate(90)" x="4.5 11.3 22.5 31.5 40.5 49.5" y="6.3" font-size="18" fill="#000" text-anchor="middle">3.3266</text>
<text transform="translate(901.8,539.5) rotate(90)" x="4.5 11.3 22.5 31.5 40.5 49.5" y="6.3" font-size="18" fill="#000" text-anchor="middle">3.6013</text>
<text transform="translate(1052.9,539.5) rotate(90)" x="4.5 11.3 22.5 31.5 40.5 49.5" y="6.3" font-size="18" fill="#000" text-anchor="middle">3.8760</text>
<text transform="translate(1204.0,539.5) rotate(90)" x="4.5 11.3 22.5 31.5 40.5 49.5" y="6.3" font-size="18" fill="#000" text-anchor="middle">4.1507</text>
<text x="508.0 520.0 532.0 544.0 556.0 568.0 577.4 592.0 604.0 616.0 628.0" y="244.5" font-size="24" text-anchor="middle" fill="#000"  xml:space="preserve">LSL: 2.9959</text>
<text x="1058.0 1070.0 1082.0 1094.0 1106.0 1118.0 1127.4 1142.0 1154.0 1166.0 1178.0" y="244.5" font-size="24" text-anchor="middle" fill="#000"  xml:space="preserve">USL: 3.9959</text>
<rect x="861.5" y="126.5" width="558" height="29" fill="none" stroke="#8a8a8a" stroke-width="1"/>
<rect x="873.5" y="134.5" width="22" height="12" fill="#00ff00" stroke="#333" stroke-width="0.8"/>
<rect x="960.5" y="134.5" width="22" height="12" fill="#ff0000" stroke="#333" stroke-width="0.8"/>
<line x1="1062" y1="140.5" x2="1094" y2="140.5" stroke="#8800ff" stroke-width="3"/>
<line x1="1139" y1="140.5" x2="1171" y2="140.5" stroke="#0000ff" stroke-width="3"/>
<line x1="1216" y1="140.5" x2="1248" y2="140.5" stroke="#00ffff" stroke-width="3"/>
<line x1="1293" y1="140.5" x2="1325" y2="140.5" stroke="#9a9a9a" stroke-width="2.4"/>
<text x="908" y="147.5" font-size="19" font-family="Liberation Sans, sans-serif" fill="#111">合格</text>
<text x="995" y="147.5" font-size="19" font-family="Liberation Sans, sans-serif" fill="#111">不合格</text>
<text x="1333" y="147.5" font-size="19" font-family="Liberation Sans, sans-serif" fill="#111">分布曲线</text>
<text x="1106.3 1115.9 1125.5" y="148" font-size="19" text-anchor="middle" fill="#000" style="fill:#111" xml:space="preserve">LSL</text>
<text x="1183.3 1192.9 1202.5" y="148" font-size="19" text-anchor="middle" fill="#000" style="fill:#111" xml:space="preserve">USL</text>
<text x="1255" y="148" font-size="19" fill="#111">6<tspan dx="4">σ</tspan></text>
</svg>
<div class="b" style="left:339px;top:599px;width:1106px;height:391px;background:#f0f0f0"></div>
<div class="b" style="left:339px;top:606px;width:1080px;height:29px;background:#e9edf5"></div>
<div class="b" style="left:488px;top:607px;width:1px;height:28px;background:#d2d6de"></div>
<div class="b" style="left:638px;top:607px;width:1px;height:28px;background:#d2d6de"></div>
<div class="b" style="left:788px;top:607px;width:1px;height:28px;background:#d2d6de"></div>
<div class="b" style="left:938px;top:607px;width:1px;height:28px;background:#d2d6de"></div>
<div class="b" style="left:1088px;top:607px;width:1px;height:28px;background:#d2d6de"></div>
<div class="b" style="left:1419px;top:607px;width:1px;height:28px;background:#d2d6de"></div>
<div class="t" style="left:339px;width:149px;top:611px;font-size:18px;color:#3c3c3c;text-align:center">名称</div>
<div class="t" style="left:488px;width:150px;top:611px;font-size:18px;color:#3c3c3c;text-align:center">类别</div>
<div class="t" style="left:638px;width:150px;top:611px;font-size:18px;color:#3c3c3c;text-align:center">公差值</div>
<div class="t" style="left:788px;width:150px;top:611px;font-size:18px;color:#3c3c3c;text-align:center">贡献度</div>
<div class="t" style="left:938px;width:150px;top:611px;font-size:18px;color:#3c3c3c;text-align:center">传递系数</div>
<div class="t" style="left:1088px;width:331px;top:611px;font-size:18px;color:#3c3c3c;text-align:center">特征<span style="font-family:'Liberation Serif',serif">/</span>装配位置</div>
<div class="b" style="left:339px;top:635px;width:1080px;height:355px;overflow:hidden">
<div class="b" style="left:0;top:0px;width:1080px;height:45px;background:#ffffff"></div>
<div class="t" style="left:0px;width:149px;top:12px;font-size:20px;letter-spacing:-0.3px;color:#5e5e5e;text-align:center">Half<span style="letter-spacing:-2.8px">_</span>Hinge<span style="letter-spacing:-2.8px">_</span>Up...</div>
<div class="t" style="left:149px;width:150px;top:12px;font-size:20px;letter-spacing:-0.3px;color:#5e5e5e;text-align:center"><span style="font-size:18px;letter-spacing:0">位置度</span></div>
<div class="t" style="left:299px;width:150px;top:12px;font-size:20px;letter-spacing:-0.3px;color:#5e5e5e;text-align:center">0.2</div>
<div class="t" style="left:449px;width:150px;top:12px;font-size:20px;letter-spacing:-0.3px;color:#5e5e5e;text-align:center">32.8949</div>
<div class="t" style="left:599px;width:150px;top:12px;font-size:20px;letter-spacing:-0.3px;color:#5e5e5e;text-align:center">0.2464</div>
<div class="t" style="left:749px;width:331px;top:12px;font-size:20px;letter-spacing:-0.3px;color:#1f80ee;text-align:center">Product/BIW/Carframe/Carframe /...</div>
<div class="b" style="left:0;top:45px;width:1080px;height:45px;background:#f3f4fb"></div>
<div class="t" style="left:0px;width:149px;top:57px;font-size:20px;letter-spacing:-1.3px;color:#5e5e5e;text-align:center">S25<span style="letter-spacing:-2.8px">_</span>5<span style="letter-spacing:-2.8px">_</span>F</div>
<div class="t" style="left:149px;width:150px;top:57px;font-size:20px;letter-spacing:-0.3px;color:#5e5e5e;text-align:center"><span style="font-size:18px;letter-spacing:0">轮廓度</span></div>
<div class="t" style="left:299px;width:150px;top:57px;font-size:20px;letter-spacing:-0.3px;color:#5e5e5e;text-align:center">1</div>
<div class="t" style="left:449px;width:150px;top:57px;font-size:20px;letter-spacing:-0.3px;color:#5e5e5e;text-align:center">21.6721</div>
<div class="t" style="left:599px;width:150px;top:57px;font-size:20px;letter-spacing:-0.3px;color:#5e5e5e;text-align:center">1.0000</div>
<div class="t" style="left:749px;width:331px;top:57px;font-size:20px;letter-spacing:-0.3px;color:#1f80ee;text-align:center">Product/BIW/Carframe/Carframe /S...</div>
<div class="b" style="left:0;top:90px;width:1080px;height:45px;background:#ffffff"></div>
<div class="t" style="left:0px;width:149px;top:102px;font-size:20px;letter-spacing:-1.3px;color:#5e5e5e;text-align:center">S25<span style="letter-spacing:-2.8px">_</span>5<span style="letter-spacing:-2.8px">_</span>F</div>
<div class="t" style="left:149px;width:150px;top:102px;font-size:20px;letter-spacing:-0.3px;color:#5e5e5e;text-align:center"><span style="font-size:18px;letter-spacing:0">轮廓度</span></div>
<div class="t" style="left:299px;width:150px;top:102px;font-size:20px;letter-spacing:-0.3px;color:#5e5e5e;text-align:center">1</div>
<div class="t" style="left:449px;width:150px;top:102px;font-size:20px;letter-spacing:-0.3px;color:#5e5e5e;text-align:center">21.6721</div>
<div class="t" style="left:599px;width:150px;top:102px;font-size:20px;letter-spacing:-0.3px;color:#5e5e5e;text-align:center">-1.0000</div>
<div class="t" style="left:749px;width:331px;top:102px;font-size:20px;letter-spacing:-0.3px;color:#1f80ee;text-align:center">Product/BIW/Rear<span style="letter-spacing:-2.8px">_</span>Door<span style="letter-spacing:-2.8px">_</span>L/Rear<span style="letter-spacing:-2.8px">_</span>Do...</div>
<div class="b" style="left:0;top:135px;width:1080px;height:45px;background:#f3f4fb"></div>
<div class="t" style="left:0px;width:149px;top:147px;font-size:20px;letter-spacing:-1.3px;color:#5e5e5e;text-align:center">SB<span style="letter-spacing:-2.8px">_</span>L<span style="letter-spacing:-2.8px">_</span>Gap<span style="letter-spacing:-2.8px">_</span>X</div>
<div class="t" style="left:149px;width:150px;top:147px;font-size:20px;letter-spacing:-0.3px;color:#5e5e5e;text-align:center"><span style="font-size:18px;letter-spacing:0">轮廓度</span></div>
<div class="t" style="left:299px;width:150px;top:147px;font-size:20px;letter-spacing:-0.3px;color:#5e5e5e;text-align:center">1</div>
<div class="t" style="left:449px;width:150px;top:147px;font-size:20px;letter-spacing:-0.3px;color:#5e5e5e;text-align:center">16.6916</div>
<div class="t" style="left:599px;width:150px;top:147px;font-size:20px;letter-spacing:-0.3px;color:#5e5e5e;text-align:center">-0.8776</div>
<div class="t" style="left:749px;width:331px;top:147px;font-size:20px;letter-spacing:-0.3px;color:#1f80ee;text-align:center">Product/BIW/Carframe/Carframe /S...</div>
<div class="b" style="left:0;top:180px;width:1080px;height:45px;background:#ffffff"></div>
<div class="t" style="left:0px;width:149px;top:192px;font-size:20px;letter-spacing:-0.3px;color:#5e5e5e;text-align:center">Half<span style="letter-spacing:-2.8px">_</span>Hinge<span style="letter-spacing:-2.8px">_</span>Up...</div>
<div class="t" style="left:149px;width:150px;top:192px;font-size:20px;letter-spacing:-0.3px;color:#5e5e5e;text-align:center"><span style="font-size:18px;letter-spacing:0">位置度</span></div>
<div class="t" style="left:299px;width:150px;top:192px;font-size:20px;letter-spacing:-0.3px;color:#5e5e5e;text-align:center">0.2</div>
<div class="t" style="left:449px;width:150px;top:192px;font-size:20px;letter-spacing:-0.3px;color:#5e5e5e;text-align:center">3.4041</div>
<div class="t" style="left:599px;width:150px;top:192px;font-size:20px;letter-spacing:-0.3px;color:#5e5e5e;text-align:center">0.0793</div>
<div class="t" style="left:749px;width:331px;top:192px;font-size:20px;letter-spacing:-0.3px;color:#1f80ee;text-align:center">Product/BIW/Rear<span style="letter-spacing:-2.8px">_</span>Door<span style="letter-spacing:-2.8px">_</span>L/Fix<span style="letter-spacing:-2.8px">_</span>Rear...</div>
<div class="b" style="left:0;top:225px;width:1080px;height:45px;background:#f3f4fb"></div>
<div class="t" style="left:0px;width:149px;top:237px;font-size:20px;letter-spacing:-0.3px;color:#5e5e5e;text-align:center">Half<span style="letter-spacing:-2.8px">_</span>Hinge<span style="letter-spacing:-2.8px">_</span>Do...</div>
<div class="t" style="left:149px;width:150px;top:237px;font-size:20px;letter-spacing:-0.3px;color:#5e5e5e;text-align:center"><span style="font-size:18px;letter-spacing:0">位置度</span></div>
<div class="t" style="left:299px;width:150px;top:237px;font-size:20px;letter-spacing:-0.3px;color:#5e5e5e;text-align:center">0.2</div>
<div class="t" style="left:449px;width:150px;top:237px;font-size:20px;letter-spacing:-0.3px;color:#5e5e5e;text-align:center">1.1835</div>
<div class="t" style="left:599px;width:150px;top:237px;font-size:20px;letter-spacing:-0.3px;color:#5e5e5e;text-align:center">0.0467</div>
<div class="t" style="left:749px;width:331px;top:237px;font-size:20px;letter-spacing:-0.3px;color:#1f80ee;text-align:center">Product/BIW/Carframe/Carframe /...</div>
<div class="b" style="left:0;top:270px;width:1080px;height:45px;background:#ffffff"></div>
<div class="t" style="left:0px;width:149px;top:282px;font-size:20px;letter-spacing:-1.3px;color:#5e5e5e;text-align:center">RD<span style="letter-spacing:-2.8px">_</span>L<span style="letter-spacing:-2.8px">_</span>Flush<span style="letter-spacing:-2.8px">_</span>Z</div>
<div class="t" style="left:149px;width:150px;top:282px;font-size:20px;letter-spacing:-0.3px;color:#5e5e5e;text-align:center"><span style="font-size:18px;letter-spacing:0">轮廓度</span></div>
<div class="t" style="left:299px;width:150px;top:282px;font-size:20px;letter-spacing:-0.3px;color:#5e5e5e;text-align:center">1.6</div>
<div class="t" style="left:449px;width:150px;top:282px;font-size:20px;letter-spacing:-0.3px;color:#5e5e5e;text-align:center">0.3842</div>
<div class="t" style="left:599px;width:150px;top:282px;font-size:20px;letter-spacing:-0.3px;color:#5e5e5e;text-align:center">0.0832</div>
<div class="t" style="left:749px;width:331px;top:282px;font-size:20px;letter-spacing:-0.3px;color:#1f80ee;text-align:center">Product/BIW/Rear<span style="letter-spacing:-2.8px">_</span>Door<span style="letter-spacing:-2.8px">_</span>L/Rear<span style="letter-spacing:-2.8px">_</span>Do...</div>
<div class="b" style="left:0;top:315px;width:1080px;height:45px;background:#f3f4fb"></div>
<div class="t" style="left:0px;width:149px;top:327px;font-size:20px;letter-spacing:-1.3px;color:#5e5e5e;text-align:center">SB<span style="letter-spacing:-2.8px">_</span>L<span style="letter-spacing:-2.8px">_</span>Flush<span style="letter-spacing:-2.8px">_</span>Z</div>
<div class="t" style="left:149px;width:150px;top:327px;font-size:20px;letter-spacing:-0.3px;color:#5e5e5e;text-align:center"><span style="font-size:18px;letter-spacing:0">轮廓度</span></div>
<div class="t" style="left:299px;width:150px;top:327px;font-size:20px;letter-spacing:-0.3px;color:#5e5e5e;text-align:center">1</div>
<div class="t" style="left:449px;width:150px;top:327px;font-size:20px;letter-spacing:-0.3px;color:#5e5e5e;text-align:center">0.3323</div>
<div class="t" style="left:599px;width:150px;top:327px;font-size:20px;letter-spacing:-0.3px;color:#5e5e5e;text-align:center">-0.1238</div>
<div class="t" style="left:749px;width:331px;top:327px;font-size:20px;letter-spacing:-0.3px;color:#1f80ee;text-align:center">Product/BIW/Carframe/Carframe /S...</div>
</div>
<div class="b" style="left:1420px;top:632px;width:24px;height:232px;background:#cdcdcd"></div>
<svg class="b" style="left:1420px;top:599px" width="25" height="391"><path d="M7.5 25.5L12.5 19.5L17.5 25.5" fill="none" stroke="#555" stroke-width="2.9"/><path d="M7.5 375.5L12.5 381.5L17.5 375.5" fill="none" stroke="#555" stroke-width="2.9"/></svg>
<div class="b" style="left:1px;top:45px;width:1456px;height:957px;border:1px solid #f9fafd;border-top:0"></div>
<div class="b" style="left:0;top:0;width:1458px;height:1003px;border:1px solid #5f5f5f"></div>
</body></html>
